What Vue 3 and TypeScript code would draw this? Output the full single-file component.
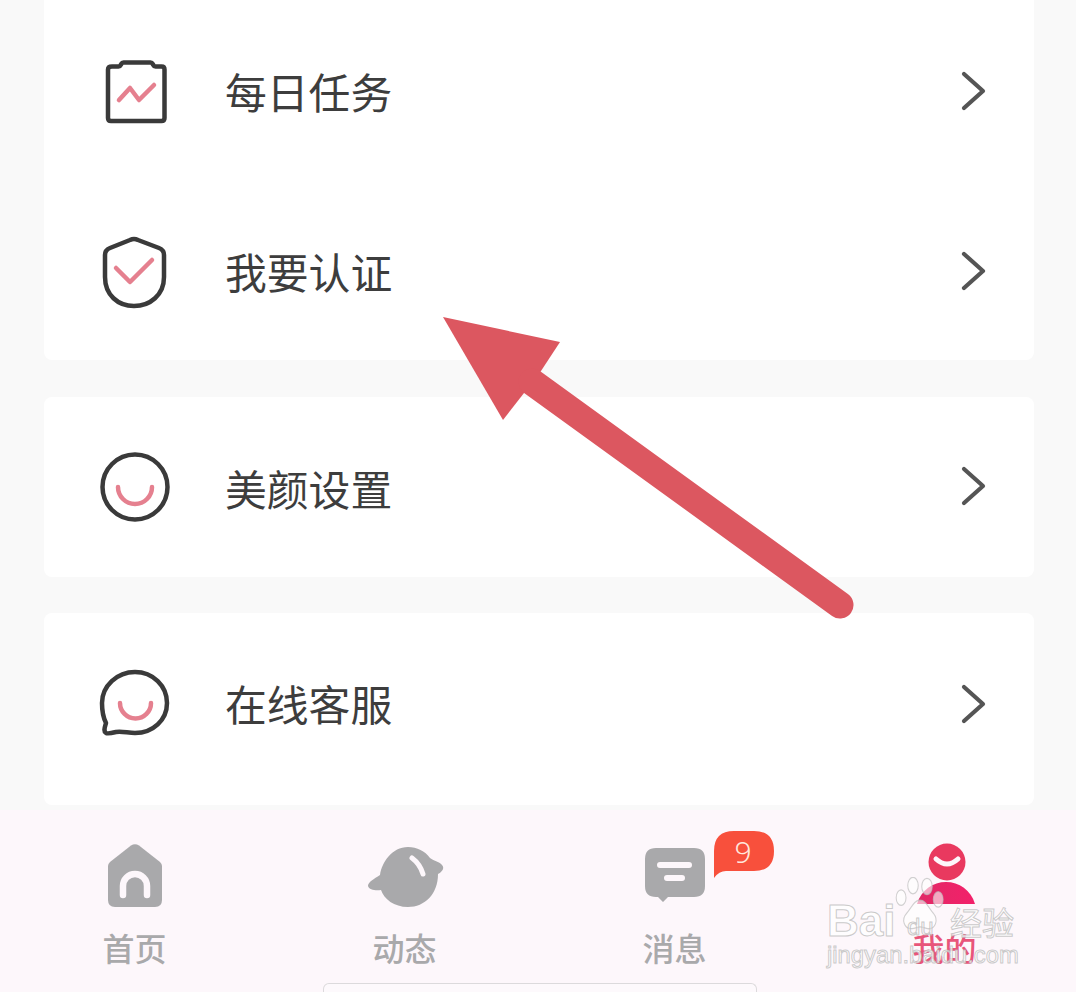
<script setup lang="ts">
interface Row { label: string; icon: string }
const cards: { cls: string; rows: Row[] }[] = [
  { cls: 'c1', rows: [{ label: '每日任务', icon: 'task' }, { label: '我要认证', icon: 'shield' }] },
  { cls: 'c2', rows: [{ label: '美颜设置', icon: 'smile' }] },
  { cls: 'c3', rows: [{ label: '在线客服', icon: 'chat' }] },
]
const tabs = [
  { label: '首页', icon: 'home' },
  { label: '动态', icon: 'planet' },
  { label: '消息', icon: 'msg' },
  { label: '我的', icon: 'me' },
]
</script>

<template>
  <div class="page">
    <div class="stack">
      <section v-for="card in cards" :key="card.cls" class="card" :class="card.cls">
        <div v-for="row in card.rows" :key="row.label" class="row">
          <svg class="row-icon" viewBox="0 0 80 80" width="80" height="80" fill="none" stroke-linecap="round" stroke-linejoin="round">
            <template v-if="row.icon === 'task'">
              <path class="dark" d="M18 14.500h6.500q1.500 0 2.200-1.500l.6-1q.7-1.500 2.200-1.500h27q1.500 0 2.200 1.500l.6 1q.7 1.500 2.200 1.500h6q3 0 3 3V66q0 3-3 3H17q-3 0-3-3V17.500q0-3 4-3z" />
              <path class="pink" d="M25 48 36 36l9 12 15-15" />
            </template>
            <template v-else-if="row.icon === 'shield'">
              <path class="dark" d="M40 7q2 0 4 1l21 8q5 2 5 7v22c0 18-14 29-30 29S11 63 11 45V23q0-5 5-7l20-8q2-1 4-1z" />
              <path class="pink" d="M22 36l14 14 22-22" />
            </template>
            <template v-else-if="row.icon === 'smile'">
              <circle class="dark" cx="41" cy="40" r="32.500" />
              <path class="pink" d="M24 40a17 17 0 0 0 34 0" />
            </template>
            <template v-else>
              <path class="dark" d="M41 7c18 0 32 14 32 31S59 68 41 68c-7 0-13-2-19-1-4 1-8 2-10 1-3-2-1-6 0-10-3-6-4-13-4-20C8 21 23 7 41 7z" />
              <path class="pink" d="M26 38a15.500 15.500 0 0 0 31 0" />
            </template>
          </svg>
          <span class="row-label">{{ row.label }}</span>
          <svg class="chevron" viewBox="0 0 40 48" width="40" height="48" fill="none">
            <path d="M9 7l19 17L9 41" />
          </svg>
        </div>
      </section>
    </div>

    <nav class="tabbar">
      <div v-for="tab in tabs" :key="tab.label" class="tab" :class="{ active: tab.icon === 'me' }">
        <svg class="tab-icon" viewBox="0 0 80 72" width="80" height="72">
          <template v-if="tab.icon === 'home'">
            <path fill="#a9a9ab" d="M36 7.500q4-2.500 8 0L65 24q2 2 2 4v34q0 7-7 7H20q-7 0-7-7V28q0-2 2-4z" />
            <path fill="none" stroke="#fdf7fb" stroke-width="6.500" stroke-linecap="round" d="M28 57V48a12 12 0 0 1 24 0V57" />
          </template>
          <template v-else-if="tab.icon === 'planet'">
            <path fill="#a9a9ab" d="M43 9c9 0 17 4 22 11 4 3 10 4 12 7 3 3 0 7-4 9 0 20-13 33-30 33-14 0-24-8-27-17-5 1-12 0-13-4 0-4 6-7 12-11C17 24 27 9 43 9z" />
            <path fill="none" stroke="#fdf7fb" stroke-width="5" stroke-linecap="round" d="M47 20q8 6 11 16" />
          </template>
          <template v-else-if="tab.icon === 'msg'">
            <path fill="#a9a9ab" d="M21 10h38q11 0 11 11v27q0 11-11 11H33l-5 5-5-5h-2q-11 0-11-11V21q0-11 11-11z" />
            <path fill="none" stroke="#fdf7fb" stroke-width="6" stroke-linecap="round" d="M25 27h29M32 40h15" />
          </template>
          <template v-else>
            <defs>
              <linearGradient id="bodyFill" x1="0" y1="0" x2="1" y2="0">
                <stop offset="0" stop-color="#e02a66" />
                <stop offset="1" stop-color="#f3206a" />
              </linearGradient>
            </defs>
            <circle cx="42" cy="24" r="18.500" fill="#e9395f" />
            <path fill="none" stroke="#fdf7fb" stroke-width="5" stroke-linecap="round" d="M31 21q11 10 22 0" />
            <path fill="url(#bodyFill)" d="M12 66c4-14 16-22 29-22s25 8 29 22z" />
          </template>
        </svg>
        <span class="tab-label">{{ tab.label }}</span>
        <svg v-if="tab.icon === 'msg'" class="badge" viewBox="0 0 60 48" width="60" height="48">
          <path fill="#f8503c" d="M0 47V20Q0 0 20 0h20q20 0 20 20t-20 20H12Q5 40 0 47z" />
          <text x="29" y="32" text-anchor="middle" class="badge-text">9</text>
        </svg>
      </div>
    </nav>

    <div class="home-bar"></div>

    <svg class="arrow" viewBox="0 0 1076 992" width="1076" height="992">
      <polygon points="443,317 560,342 541,371 524,393 503,420" fill="#dc5760" />
      <path d="M532 382L840 605" stroke="#dc5760" stroke-width="27" stroke-linecap="round" fill="none" />
    </svg>

    <div class="mark">
      <svg class="paw" viewBox="0 0 80 72" width="56" height="62" preserveAspectRatio="none">
        <g fill="rgba(255,255,255,.6)" stroke="rgba(190,190,190,.7)" stroke-width="1.500">
          <ellipse cx="13" cy="24" rx="7" ry="9" />
          <ellipse cx="30" cy="10" rx="7.500" ry="9.500" />
          <ellipse cx="50" cy="11" rx="7.500" ry="9.500" />
          <ellipse cx="66" cy="26" rx="7" ry="9" />
          <path d="M40 27c9 0 12 9 19 15 8 8 3 19-8 18-5-1-8-2-11-2s-7 2-12 2c-11 0-15-11-7-18 7-6 10-15 19-15z" />
        </g>
      </svg>
      <span class="mark-bai">Bai</span>
      <span class="mark-du">du</span>
      <span class="mark-cn">经验</span>
      <span class="mark-url">jingyan.baidu.com</span>
    </div>
  </div>
</template>

<style scoped>
.page {
  position: relative;
  width: 1076px;
  height: 992px;
  overflow: hidden;
  background: #f9f9f9;
  font-family: "Noto Sans CJK SC", "Noto Sans", sans-serif;
}
.stack {
  display: flex;
  flex-direction: column;
  padding: 0 42px 0 44px;
  height: 810px;
  box-sizing: border-box;
}
.card {
  display: grid;
  background: #fff;
  border-radius: 8px;
}
.c1 { grid-template-rows: 184px 176px; border-radius: 0 0 8px 8px; }
.c2 { grid-template-rows: 180px; margin-top: 37px; }
.c3 { grid-template-rows: 184px; padding-bottom: 8px; margin-top: 36px; }
.c2 .row-label { margin-top: 3px; }
.c3 .row-label { margin-bottom: 3px; }
.row {
  display: flex;
  align-items: center;
  padding: 0 39px 0 50px;
}
.row-icon { flex: none; }
.dark { stroke: #3a3a3a; stroke-width: 4.500; }
.pink { stroke: #e5808f; stroke-width: 4.500; }
.row-label {
  margin-left: 51px;
  font-size: 41.800px;
  line-height: 1;
  color: #3d3d3d;
}
.chevron { margin: -2px 0 0 auto; flex: none; }
.chevron path { stroke: #555; stroke-width: 4.200; stroke-linecap: round; stroke-linejoin: round; }
.tabbar {
  display: grid;
  grid-template-columns: repeat(4, 270px);
  height: 182px;
  padding-top: 28px;
  box-sizing: border-box;
  background: #fdf7fb;
}
.tab {
  position: relative;
  display: flex;
  flex-direction: column;
  align-items: center;
}
.tab-label {
  margin-top: 17px;
  margin-right: 1px;
  font-size: 32px;
  line-height: 40px;
  font-weight: 500;
  color: #a9a9ab;
}
.active .tab-label { color: #e8557a; }
.badge { position: absolute; left: 174px; top: -7px; }
.badge-text {
  font-size: 30px;
  font-weight: 300;
  fill: #ffe6dc;
  font-family: "Noto Sans", sans-serif;
}
.home-bar {
  position: absolute;
  left: 323px;
  bottom: 0;
  width: 434px;
  height: 9px;
  box-sizing: border-box;
  background: #fdf9fc;
  border: 1px solid #dcdadc;
  border-bottom: 0;
  border-radius: 6px 6px 0 0;
}
.arrow { position: absolute; left: 0; top: 0; pointer-events: none; }
.mark {
  position: absolute;
  left: 827px;
  top: 872px;
  width: 200px;
  height: 100px;
  pointer-events: none;
  font-family: "Liberation Sans", sans-serif;
  color: rgba(255, 255, 255, 0.78);
  -webkit-text-stroke: 1px rgba(185, 185, 185, 0.75);
}
.paw { position: absolute; left: 65px; top: 5px; }
.mark-bai, .mark-du, .mark-cn, .mark-url { position: absolute; white-space: nowrap; }
.mark-bai { left: 0; top: 27px; font-size: 44px; line-height: 44px; font-weight: 700; }
.mark-du { left: 80px; top: 42px; font-size: 24px; line-height: 26px; color: rgba(255, 255, 255, 0.4); }
.mark-cn { left: 123px; top: 31px; font-size: 32px; line-height: 36px; font-family: "Noto Sans CJK SC", sans-serif; }
.mark-url { left: 0; top: 68px; font-size: 23.800px; line-height: 30px; }
</style>
